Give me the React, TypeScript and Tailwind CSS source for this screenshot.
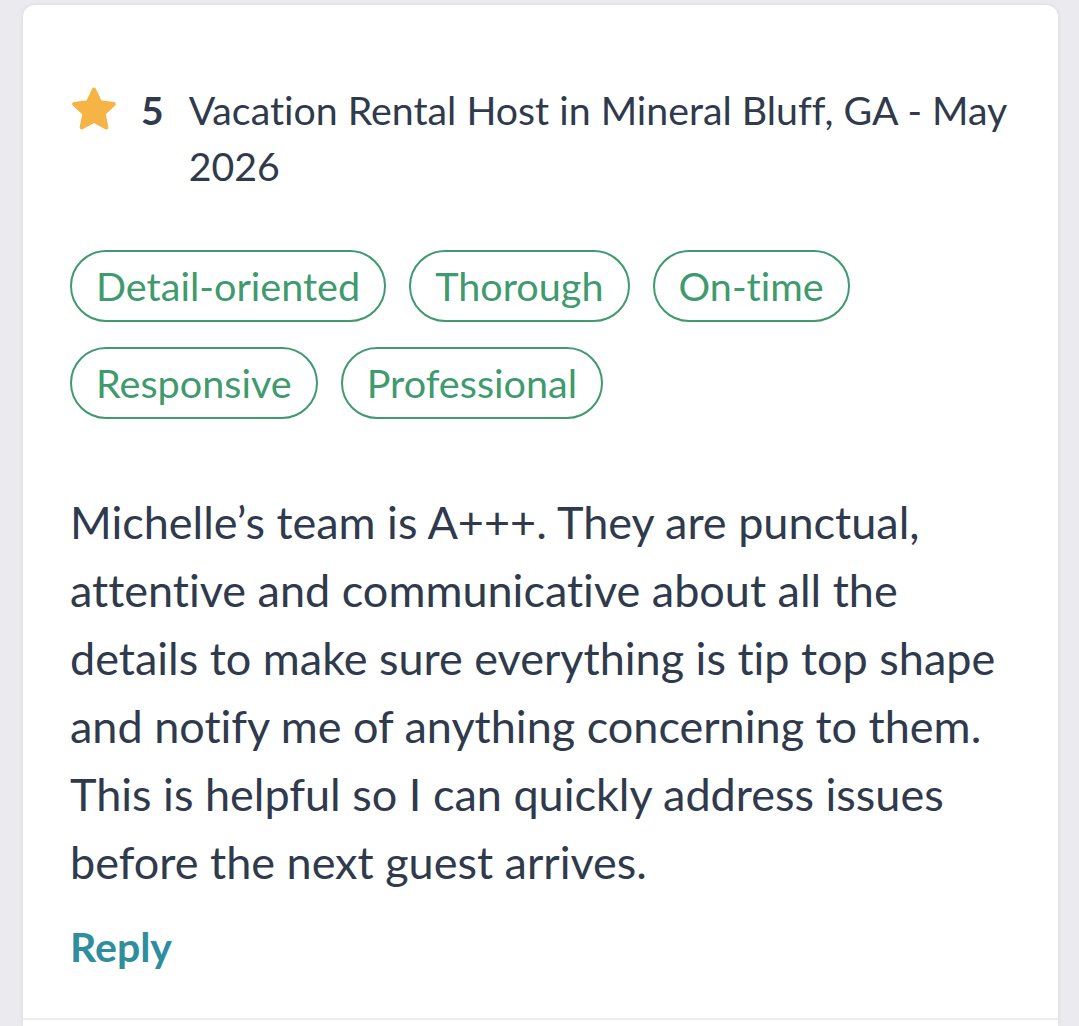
const TAGS = ["Detail-oriented", "Thorough", "On-time", "Responsive", "Professional"];

function Star() {
  return (
    <svg width="50" height="48" viewBox="0 0 24 23" className="shrink-0">
      <path
        d="M12 2.2l2.9 6.1 6.6.8-4.9 4.6 1.3 6.6L12 17.1l-5.9 3.2 1.3-6.6-4.9-4.6 6.6-.8z"
        fill="#f6b446"
        stroke="#f6b446"
        strokeWidth="2"
        strokeLinejoin="round"
      />
    </svg>
  );
}

export default function App() {
  return (
    <div
      className="min-h-[1026px] bg-[#ebebef] pl-[23px] pr-[21px] pt-[5px] [font-variant-ligatures:none]"
      style={{ fontFamily: "Lato, 'Noto Sans', sans-serif" }}
    >
      <div className="min-h-[1021px] rounded-t-[12px] bg-white shadow-[0_0_4px_rgba(0,0,0,0.08)]">
        <div className="border-b-2 border-[#ededf0] px-[47px] pb-[47px] pt-[77px]">
          <div className="flex items-start">
            <div className="mt-[3px] -ml-[1px] flex items-center">
              <Star />
            </div>
            <span className="ml-[22px] text-[39px] font-bold leading-[56px] text-[#2f3a4c]">5</span>
            <p className="ml-[25px] text-[39.3px] leading-[56px] text-[#2f3a4c]">
              Vacation Rental Host in Mineral Bluff, GA - May 2026
            </p>
          </div>

          <div className="mt-[56px] flex flex-wrap gap-x-[23px] gap-y-[25px]">
            {TAGS.map((t) => (
              <span
                key={t}
                className="flex h-[72px] items-center rounded-full border-2 border-[#3f9a6e] px-[24px] text-[39.6px] text-[#3f9a6e]"
              >
                {t}
              </span>
            ))}
          </div>

          <p className="mt-[69px] text-[45px] leading-[68px] text-[#2f3a4c]">
            Michelle’s team is A+++. They are punctual, attentive and communicative about all the
            details to make sure everything is tip top shape and notify me of anything concerning to
            them. This is helpful so I can quickly address issues before the next guest arrives.
          </p>

          <button className="mt-[27px] block text-[41px] font-bold leading-[48px] text-[#2e8e9e]">
            Reply
          </button>
        </div>
      </div>
    </div>
  );
}
